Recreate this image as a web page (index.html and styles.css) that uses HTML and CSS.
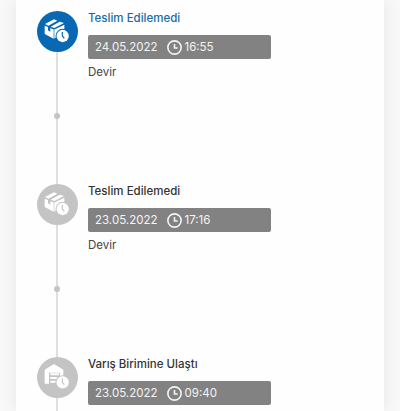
FILE: index.html
```
<!DOCTYPE html>
<html lang="tr">
<head>
  <meta charset="UTF-8" />
  <meta name="viewport" content="width=device-width, initial-scale=1.0"/>
  <title>Kargo Takip</title>
  <link rel="stylesheet" href="styles.css">
</head>
<body>
  <!-- shared icons -->
  <svg class="sprite">
    <symbol id="box" viewBox="0 0 123 123">
      <path d="M24 39 L51 25 L61 29 L34 44 Z M41 47 L68 32 L81 36 L52 51 Z M23 44 L33 48 V58 L40 62 V51 L51 56 L82 41 V66 L50 83 L23 69 Z"/>
      <path class="edge" d="M51 57 V83"/>
      <circle class="gap" cx="77" cy="75" r="21.5"/>
      <circle cx="77" cy="75" r="18.5"/>
      <path class="hands" d="M76 63 V75 L82 82"/>
    </symbol>
    <symbol id="depot" viewBox="0 0 123 123">
      <path d="M23 38 L51 21 L79 38 V80 H69 V47 H36 V80 H23 Z M40 49 H66 V55 H40 Z M40 60 H66 V66 H40 Z M40 71 H60 V77 H40 Z"/>
      <circle class="gap" cx="77" cy="76" r="21.5"/>
      <circle cx="77" cy="76" r="18.5"/>
      <path class="hands" d="M76 64 V76 L82 83"/>
    </symbol>
    <symbol id="clock" viewBox="0 0 14 14">
      <circle cx="7" cy="7" r="6.2"/>
      <path d="M7 3.8 V7.4 H10"/>
    </symbol>
  </svg>

  <div class="card">
    <div class="step active">
      <div class="track">
        <div class="icon"><svg><use href="#box"/></svg></div>
        <div class="line"><span class="dot"></span></div>
      </div>
      <div class="info">
        <h4>Teslim Edilemedi</h4>
        <div class="date">
          <span class="day">24.05.2022</span>
          <svg class="clock"><use href="#clock"/></svg>
          <span>16:55</span>
        </div>
        <p>Devir</p>
      </div>
    </div>

    <div class="step">
      <div class="track">
        <div class="icon"><svg><use href="#box"/></svg></div>
        <div class="line"><span class="dot"></span></div>
      </div>
      <div class="info">
        <h4>Teslim Edilemedi</h4>
        <div class="date">
          <span class="day">23.05.2022</span>
          <svg class="clock"><use href="#clock"/></svg>
          <span>17:16</span>
        </div>
        <p>Devir</p>
      </div>
    </div>

    <div class="step">
      <div class="track">
        <div class="icon"><svg><use href="#depot"/></svg></div>
        <div class="line"></div>
      </div>
      <div class="info">
        <h4>Varış Birimine Ulaştı</h4>
        <div class="date">
          <span class="day">23.05.2022</span>
          <svg class="clock"><use href="#clock"/></svg>
          <span>09:40</span>
        </div>
      </div>
    </div>
  </div>
</body>
</html>
```

FILE: styles.css
```
* {
  box-sizing: border-box;
}

body {
  font-family: Inter, 'Liberation Sans', sans-serif;
  background-color: #f8f8f8;
  color: #444;
  margin: 0;
  height: 411px;
  overflow: hidden;
}

.sprite {
  display: none;
}

.card {
  height: 411px;
  margin: 0 16px 0 15.5px;
  padding: 10.5px 21px 0;
  background: #fefefe;
  box-shadow: 0 0 14px rgba(0,0,0,0.08);
  overflow: hidden;
}

.step {
  display: flex;
  height: 173.2px;
  --tone: #c4c4c4;
}

.step.active {
  --tone: #0968b3;
}

.track {
  display: flex;
  flex-direction: column;
  align-items: center;
  width: 41px;
}

.icon {
  flex: none;
  width: 41px;
  height: 41px;
  border-radius: 50%;
  background: var(--tone);
}

.icon svg {
  display: block;
  width: 41px;
  height: 41px;
  fill: #fff;
}

.gap {
  fill: var(--tone);
}

.edge {
  stroke: var(--tone);
  stroke-width: 2;
}

.hands {
  fill: none;
  stroke: var(--tone);
  stroke-width: 3.5;
}

.line {
  flex: 1;
  display: flex;
  align-items: center;
  justify-content: center;
  width: 2px;
  padding-bottom: 3px;
  background: #dedede;
}

.dot {
  flex: none;
  width: 6px;
  height: 6px;
  border-radius: 50%;
  background: #c4c4c4;
}

.info {
  margin-left: 10.5px;
  width: 183px;
}

h4 {
  margin: 0;
  font-size: 11.5px;
  font-weight: 500;
  line-height: 14px;
  color: #333;
  white-space: nowrap;
}

.active h4 {
  color: #1a6ca5;
}

.date {
  display: flex;
  align-items: center;
  height: 24px;
  margin-top: 10.5px;
  padding-left: 7px;
  border-radius: 2px;
  background: #828282;
  color: #f4f4f4;
  font-size: 11.5px;
}

.day {
  width: 72px;
}

.clock {
  width: 15px;
  height: 15px;
  margin-right: 2.5px;
  fill: none;
  stroke: #f4f4f4;
  stroke-width: 1.5;
}

p {
  margin: 6px 0 0;
  font-size: 11.5px;
  line-height: 14px;
}
```
